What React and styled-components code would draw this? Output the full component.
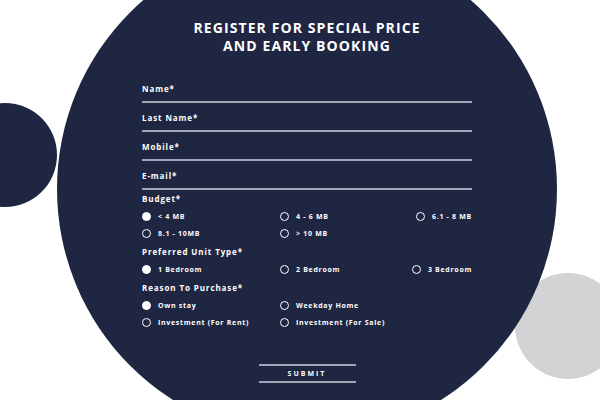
import React from 'react';
import styled, { createGlobalStyle } from 'styled-components';

const GlobalStyle = createGlobalStyle`
  html, body {
    margin: 0;
    padding: 0;
    background: #ffffff;
  }
  body {
    font-family: 'Open Sans', 'Liberation Sans', sans-serif;
  }
`;

const Page = styled.div`
  position: relative;
  width: 600px;
  height: 400px;
  overflow: hidden;
  background: #ffffff;
`;

const Blob = styled.div`
  position: absolute;
  left: ${(p) => p.x}px;
  top: ${(p) => p.y}px;
  width: ${(p) => p.size}px;
  height: ${(p) => p.size}px;
  border-radius: 50%;
  background: ${(p) => p.color};
`;

const Circle = styled.div`
  position: relative;
  width: 500px;
  height: 500px;
  margin: -61px 0 0 57px;
  border-radius: 50%;
  background: #1f2642;
  display: flex;
  flex-direction: column;
  align-items: center;
  padding-top: 80px;
  box-sizing: border-box;
  color: #ffffff;
`;

const Title = styled.h1`
  margin: 0;
  font-size: 14px;
  line-height: 18px;
  font-weight: 700;
  letter-spacing: 1.1px;
  text-align: center;
  text-transform: uppercase;
`;

const Form = styled.form`
  width: 330px;
  margin-top: 29px;
  display: flex;
  flex-direction: column;
`;

const Fields = styled.div`
  display: flex;
  flex-direction: column;
  gap: 10px;
`;

const Field = styled.div`
  display: flex;
  flex-direction: column;
`;

const Label = styled.label`
  font-size: 8px;
  line-height: 10px;
  font-weight: 700;
  letter-spacing: 0.9px;
  color: #ffffff;
`;

const Input = styled.input`
  height: 7px;
  padding: 0;
  border: none;
  border-bottom: 2px solid #a1a4b4;
  background: transparent;
  outline: none;
  color: #ffffff;
  font-size: 7px;
`;

const Group = styled.div`
  display: flex;
  flex-direction: column;
  margin-top: ${(p) => p.top}px;
`;

const Options = styled.div`
  display: grid;
  grid-template-columns: 138px 1fr auto;
  row-gap: 7px;
  margin-top: 7px;
`;

const Option = styled.label`
  display: flex;
  align-items: center;
  gap: 7px;
  height: 10px;
  font-size: 7px;
  font-weight: 700;
  letter-spacing: 0.7px;
  white-space: nowrap;
`;

const Dot = styled.span`
  width: 9px;
  height: 9px;
  box-sizing: border-box;
  border-radius: 50%;
  border: 1.5px solid #ffffff;
  background: ${(p) => (p.checked ? '#ffffff' : 'transparent')};
  flex-shrink: 0;
`;

const SubmitButton = styled.button`
  align-self: center;
  width: 97px;
  height: 19px;
  margin-top: 37px;
  padding: 0;
  background: transparent;
  border: none;
  border-top: 2px solid #a1a4b4;
  border-bottom: 2px solid #a1a4b4;
  color: #ffffff;
  font-family: inherit;
  font-size: 7px;
  font-weight: 700;
  letter-spacing: 2px;
`;

const fields = ['Name*', 'Last Name*', 'Mobile*', 'E-mail*'];

const groups = [
  {
    label: 'Budget*',
    top: 4,
    options: ['< 4 MB', '4 - 6 MB', '6.1 - 8 MB', '8.1 - 10MB', '> 10 MB'],
  },
  {
    label: 'Preferred Unit Type*',
    top: 9,
    options: ['1 Bedroom', '2 Bedroom', '3 Bedroom'],
  },
  {
    label: 'Reason To Purchase*',
    top: 9,
    options: ['Own stay', 'Weekday Home', null, 'Investment (For Rent)', 'Investment (For Sale)'],
  },
];

function RadioGroup({ group }) {
  return (
    <Group top={group.top}>
      <Label>{group.label}</Label>
      <Options>
        {group.options.map((opt, i) =>
          opt === null ? (
            <span key={i} />
          ) : (
            <Option key={opt}>
              <Dot checked={i === 0} />
              {opt}
            </Option>
          )
        )}
      </Options>
    </Group>
  );
}

export default function App() {
  return (
    <>
      <GlobalStyle />
      <Page>
        <Blob x={-47} y={103} size={104} color='#1f2642' />
        <Blob x={515} y={273} size={106} color='#d3d3d6' />
        <Circle>
          <Title>
            Register for special price
            <br />
            and early booking
          </Title>
          <Form onSubmit={(e) => e.preventDefault()}>
            <Fields>
              {fields.map((f) => (
                <Field key={f}>
                  <Label>{f}</Label>
                  <Input type='text' />
                </Field>
              ))}
            </Fields>
            {groups.map((g) => (
              <RadioGroup key={g.label} group={g} />
            ))}
            <SubmitButton type='submit'>SUBMIT</SubmitButton>
          </Form>
        </Circle>
      </Page>
    </>
  );
}
